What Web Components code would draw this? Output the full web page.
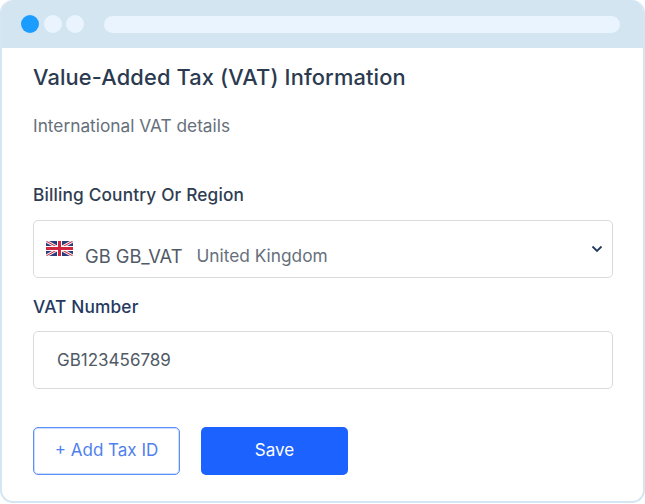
<!DOCTYPE html>
<html>
<head>
<meta charset="utf-8">
<title>VAT</title>
<style>
  html, body { margin: 0; padding: 0; background: #fff; }
  body { font-family: Inter, "Liberation Sans", sans-serif; width: 645px; height: 504px; overflow: hidden; }
</style>
</head>
<body>
<browser-window>
  <vat-form></vat-form>
</browser-window>

<script>
class BrowserWindow extends HTMLElement {
  constructor() {
    super();
    const shadow = this.attachShadow({ mode: 'open' });
    shadow.innerHTML = `
      <style>
        :host { display: flex; flex-direction: column; box-sizing: border-box; width: 645px; height: 503px; border: 2px solid #d5e5f1; border-top: 0; border-radius: 13px; overflow: hidden; background: #fff; }
        .bar { flex: none; height: 48px; margin: 0 -2px; background: #d4e5f2; display: flex; align-items: center; padding: 0 25px 0 21px; gap: 4.5px; box-sizing: border-box; }
        .dot { width: 18px; height: 18px; border-radius: 50%; background: #e9f4fe; }
        .dot.on { background: #1a9dff; }
        .url { flex: 1; height: 17px; border-radius: 9px; background: #e9f4fe; margin-left: 15px; }
      </style>
      <div class="bar">
        <span class="dot on"></span><span class="dot"></span><span class="dot"></span>
        <span class="url"></span>
      </div>
      <slot></slot>
    `;
  }
}
customElements.define('browser-window', BrowserWindow);

class UkFlag extends HTMLElement {
  constructor() {
    super();
    const shadow = this.attachShadow({ mode: 'open' });
    shadow.innerHTML = `
      <style>:host { display: block; flex: none; width: 27px; height: 15px; } svg { display: block; border-radius: 2px; }</style>
      <svg width="27" height="15" viewBox="0 0 27 15">
        <rect width="27" height="15" fill="#2b3a78"/>
        <path d="M0 0L27 15M27 0L0 15" stroke="#f3e6ea" stroke-width="3"/>
        <path d="M0 0L27 15M27 0L0 15" stroke="#d0263f" stroke-width="1"/>
        <path d="M13.5 0V15M0 7.5H27" stroke="#fff" stroke-width="5"/>
        <path d="M13.5 0V15M0 7.5H27" stroke="#d0263f" stroke-width="3"/>
      </svg>
    `;
  }
}
customElements.define('uk-flag', UkFlag);

class FieldBox extends HTMLElement {
  constructor() {
    super();
    const shadow = this.attachShadow({ mode: 'open' });
    shadow.innerHTML = `
      <style>
        :host { display: flex; box-sizing: border-box; height: 58px; width: 580px; border: 1px solid #d9d9d9; border-radius: 5px; background: #fff; position: relative; align-items: center; padding: 0 23px; color: #505a66; font-size: 17px; }
      </style>
      <slot></slot>
    `;
  }
}
customElements.define('field-box', FieldBox);

class VatForm extends HTMLElement {
  constructor() {
    super();
    const shadow = this.attachShadow({ mode: 'open' });
    shadow.innerHTML = `
      <style>
        :host { display: block; padding: 16px 0 0 31px; color: #2d3b4e; }
        h1 { margin: 0; font-size: 21.8px; line-height: 26px; font-weight: 500; letter-spacing: .15px; color: #2b3a4f; }
        .sub { margin: 26px 0 0; font-size: 17.3px; line-height: 20px; color: #66707b; }
        label { display: block; font-size: 17.3px; line-height: 20px; font-weight: 500; letter-spacing: .15px; color: #2f3d52; }
        label.country { margin-top: 49px; margin-bottom: 15px; }
        label.vat { margin-top: 19px; margin-bottom: 14px; color: #25395f; }
        .sel { display: flex; align-items: flex-start; height: 100%; margin-left: -11px; }
        uk-flag { margin-top: 20px; }
        .code { margin: 24px 0 0 12px; font-size: 18.3px; line-height: 22px; }
        .country-name { margin: 24px 0 0 14px; font-size: 17.3px; line-height: 22px; color: #66707b; }
        svg.chev { position: absolute; right: 9px; top: 24px; }
        .actions { display: flex; gap: 21px; margin-top: 38px; }
        button { box-sizing: border-box; width: 147px; height: 48px; border-radius: 5px; font: inherit; font-size: 17px; padding: 0 0 2px; cursor: pointer; }
        .ghost { background: #fff; border: 1px solid #5c90f4; box-shadow: inset 0 0 0 1px rgba(106,155,245,.35); color: #4f80ef; }
        .primary { background: #1c62ff; border: 0; color: #fff; }
      </style>
      <h1>Value-Added Tax (VAT) Information</h1>
      <p class="sub">International VAT details</p>
      <label class="country">Billing Country Or Region</label>
      <field-box>
        <div class="sel">
          <uk-flag></uk-flag>
          <span class="code">GB GB_VAT</span>
          <span class="country-name">United Kingdom</span>
        </div>
        <svg class="chev" width="12" height="8" viewBox="0 0 12 8"><path d="M1.5 1.5L6 6L10.5 1.5" fill="none" stroke="#25395f" stroke-width="1.8"/></svg>
      </field-box>
      <label class="vat">VAT Number</label>
      <field-box>GB123456789</field-box>
      <div class="actions">
        <button class="ghost">+ Add Tax ID</button>
        <button class="primary">Save</button>
      </div>
    `;
  }
}
customElements.define('vat-form', VatForm);
</script>
</body>
</html>
